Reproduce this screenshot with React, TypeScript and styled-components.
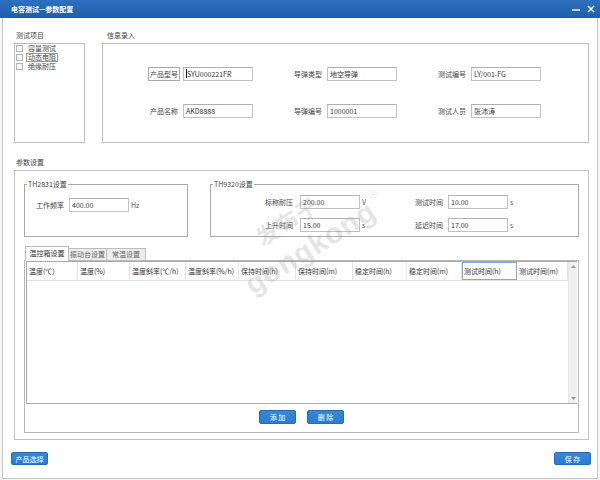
import styled, { createGlobalStyle } from 'styled-components';

const GlobalStyle = createGlobalStyle`
  html, body {
    margin: 0;
    padding: 0;
    background: #ffffff;
  }
  body {
    font-family: "Noto Sans CJK SC", "Noto Sans", sans-serif;
    font-size: 7px;
    color: #3a3a3a;
    white-space: nowrap;
  }
  * { box-sizing: border-box; }
`;

const Window = styled.div`
  position: relative;
  width: 600px;
  height: 480px;
  display: flex;
  flex-direction: column;
  overflow: hidden;
  background: #f6f6f6;
`;

const TitleBar = styled.div`
  height: 18px;
  flex-shrink: 0;
  display: flex;
  align-items: center;
  justify-content: space-between;
  padding: 0 5px 0 11px;
  background: linear-gradient(180deg, #2d70bd 0%, #1f5ea9 100%);
  color: #ffffff;
  font-size: 7px;
  font-weight: bold;
`;

const Controls = styled.div`
  display: flex;
  align-items: center;
  gap: 7px;
`;

const Frame = styled.div`
  flex: 1;
  margin: 0 2px 1px;
  border: 1px solid #c4c4c4;
  border-top: none;
  background: #ffffff;
  display: flex;
  flex-direction: column;
`;

const Content = styled.div`
  padding: 0 8px 0 11px;
`;

const TopRow = styled.div`
  display: flex;
  gap: 17px;
  margin-top: 12px;
`;

const Column = styled.div<{ $width?: number }>`
  display: flex;
  flex-direction: column;
  ${p => (p.$width ? `width: ${p.$width}px;` : 'flex: 1;')}
`;

const SectionLabel = styled.div<{ $indent?: number }>`
  height: 10px;
  line-height: 10px;
  margin-bottom: 3px;
  padding-left: ${p => p.$indent ?? 2}px;
  color: #444;
`;

const TestBox = styled.div`
  height: 100px;
  border: 1px solid #bdbdbd;
  padding: 0 0 0 1px;
  display: flex;
  flex-direction: column;
`;

const CheckRow = styled.label`
  display: flex;
  align-items: center;
  height: 9px;
  gap: 3px;
  color: #444;
`;

const CheckBox = styled.span`
  width: 7px;
  height: 7px;
  flex-shrink: 0;
  border: 1px solid #b3b3b3;
  background: #f7f7f7;
`;

const CheckText = styled.span<{ $focus?: boolean }>`
  height: 9px;
  line-height: 7px;
  padding: 0 1px;
  border: 1px solid ${p => (p.$focus ? '#9a9a9a' : 'transparent')};
`;

const InfoBox = styled.div`
  height: 100px;
  border: 1px solid #bdbdbd;
  padding: 23px 0 0 45px;
  display: grid;
  grid-template-columns: repeat(3, 144px);
  grid-auto-rows: 14px;
  row-gap: 23px;
`;

const Field = styled.div`
  display: flex;
  align-items: center;
`;

const FieldLabel = styled.span<{ $width: number; $boxed?: boolean }>`
  width: ${p => p.$width}px;
  flex-shrink: 0;
  display: flex;
  align-items: center;
  color: #444;
  & > span {
    line-height: 12px;
    padding: 0 1px;
    border: 1px solid ${p => (p.$boxed ? '#a8a8a8' : 'transparent')};
  }
`;

const TextBox = styled.div<{ $width: number }>`
  width: ${p => p.$width}px;
  height: 14px;
  flex-shrink: 0;
  border: 1px solid #c2c2c2;
  border-top-color: #b0b0b0;
  background: #ffffff;
  padding: 0 2px;
  line-height: 12px;
  color: #333;
  overflow: hidden;
`;

const Caret = styled.span`
  display: inline-block;
  width: 1px;
  height: 9px;
  vertical-align: -1px;
  background: #222;
`;

const Unit = styled.span<{ $width?: number }>`
  padding-left: 2px;
  color: #555;
  ${p => (p.$width ? `width: ${p.$width}px; flex-shrink: 0;` : '')}
`;

const ParamLabel = styled(SectionLabel)`
  margin-top: 14px;
`;

const ParamBox = styled.div`
  border: 1px solid #c0c0c0;
  padding: 8px 9px 6px;
  display: flex;
  flex-direction: column;
`;

const GroupsRow = styled.div`
  display: flex;
  gap: 22px;
`;

const Group = styled.fieldset<{ $width?: number; $pad: string }>`
  margin: 0;
  min-width: 0;
  border: 1px solid #a9a9a9;
  padding: ${p => p.$pad};
  ${p => (p.$width ? `width: ${p.$width}px; flex-shrink: 0;` : 'flex: 1;')}
  display: flex;
  flex-direction: column;
  gap: 9px;
`;

const Legend = styled.legend<{ $shift: number }>`
  margin-left: ${p => p.$shift}px;
  padding: 0 1px;
  line-height: 10px;
  color: #444;
`;

const TabBar = styled.div`
  display: flex;
  align-items: flex-end;
  height: 14px;
  margin-top: 10px;
  padding-left: 1px;
  position: relative;
  z-index: 1;
  margin-bottom: -1px;
`;

const Tab = styled.div<{ $width: number; $active?: boolean }>`
  width: ${p => p.$width}px;
  height: ${p => (p.$active ? 15 : 13)}px;
  border: 1px solid #bcbcbc;
  border-bottom: ${p => (p.$active ? 'none' : '1px solid #bcbcbc')};
  margin-left: ${p => (p.$active ? 0 : -1)}px;
  background: ${p => (p.$active ? '#ffffff' : '#ececec')};
  color: ${p => (p.$active ? '#333' : '#666')};
  text-align: center;
  line-height: ${p => (p.$active ? 13 : 11)}px;
  overflow: hidden;
`;

const TabPanel = styled.div`
  height: 173px;
  border: 1px solid #b8b8b8;
  padding: 0 1px;
  display: flex;
  flex-direction: column;
`;

const TableFrame = styled.div`
  height: 143px;
  border: 1px solid #a9a9a9;
  display: flex;
  background: #ffffff;
`;

const TableBody = styled.div`
  flex: 1;
  display: flex;
  flex-direction: column;
`;

const HeaderRow = styled.div`
  display: flex;
  height: 19px;
  border-bottom: 1px solid #e2e2e2;
`;

const HeaderCell = styled.div<{ $width: number; $selected?: boolean }>`
  width: ${p => p.$width}px;
  flex-shrink: 0;
  padding-left: 1px;
  line-height: 17px;
  overflow: hidden;
  color: #333;
  border: 1px solid ${p => (p.$selected ? '#84a9d6' : 'transparent')};
  border-right: 1px solid ${p => (p.$selected ? '#84a9d6' : '#e4e4e4')};
`;

const ScrollBar = styled.div`
  width: 9px;
  flex-shrink: 0;
  background: #f0f0f0;
  border-left: 1px solid #e6e6e6;
  display: flex;
  flex-direction: column;
  justify-content: space-between;
  align-items: center;
  padding: 3px 0;
`;

const ButtonRow = styled.div`
  display: flex;
  justify-content: center;
  gap: 11px;
  margin-top: 6px;
`;

const BlueButton = styled.button<{ $width?: number; $height?: number }>`
  width: ${p => p.$width ?? 37}px;
  height: ${p => p.$height ?? 14}px;
  padding: 0;
  border: 1px solid #1f6dbd;
  border-radius: 2px;
  background: linear-gradient(180deg, #3389dc 0%, #2a7cd0 100%);
  color: #ffffff;
  font-family: "Noto Sans CJK SC", "Noto Sans", sans-serif;
  font-size: 7px;
  line-height: 10px;
  white-space: pre;
  cursor: pointer;
`;

const Footer = styled.div`
  display: flex;
  justify-content: space-between;
  margin-top: 12px;
  padding: 0 6px 0 8px;
`;

const Watermark = styled.div`
  position: absolute;
  left: 222px;
  top: 246px;
  transform: rotate(-32deg);
  transform-origin: left top;
  color: rgba(160, 160, 160, 0.28);
  font-weight: bold;
  pointer-events: none;
  line-height: 24px;
`;

const MarkCn = styled.div`
  font-family: "Noto Sans CJK SC", sans-serif;
  font-size: 22px;
  padding-left: 34px;
  letter-spacing: 1px;
`;

const MarkEn = styled.div`
  font-family: "Liberation Sans", Arial, sans-serif;
  font-size: 29px;
  letter-spacing: 1px;
  & > sup {
    font-size: 12px;
    vertical-align: 18px;
    margin-left: 3px;
    font-weight: normal;
  }
`;

const infoFields = [
  { label: '产品型号', value: 'SYU000221FR', boxed: true, caret: true },
  { label: '导弹类型', value: '地空导弹' },
  { label: '测试编号', value: 'LY/001-FG' },
  { label: '产品名称', value: 'AKD8888' },
  { label: '导弹编号', value: '1000001' },
  { label: '测试人员', value: '张沛涛' },
];

const columns = [
  { title: '温度(℃)', width: 51 },
  { title: '温度(%)', width: 52 },
  { title: '温度斜率(℃/h)', width: 56 },
  { title: '温度斜率(%/h)', width: 53 },
  { title: '保持时间(h)', width: 57 },
  { title: '保持时间(m)', width: 57 },
  { title: '稳定时间(h)', width: 54 },
  { title: '稳定时间(m)', width: 55 },
  { title: '测试时间(h)', width: 55, selected: true },
  { title: '测试时间(m)', width: 51 },
];

const Arrow = ({ up }: { up?: boolean }) => (
  <svg width="5" height="3" viewBox="0 0 5 3">
    <path d={up ? 'M0 3 L2.5 0 L5 3 Z' : 'M0 0 L2.5 3 L5 0 Z'} fill="#9a9a9a" />
  </svg>
);

export default function App() {
  return (
    <Window>
      <GlobalStyle />
      <TitleBar>
        <span>电容测试—参数配置</span>
        <Controls>
          <svg width="8" height="8" viewBox="0 0 8 8">
            <path d="M0 5 H8" stroke="#ffffff" strokeWidth="1.4" />
          </svg>
          <svg width="8" height="8" viewBox="0 0 8 8">
            <path d="M1 1 L7 7 M7 1 L1 7" stroke="#ffffff" strokeWidth="1.5" />
          </svg>
        </Controls>
      </TitleBar>

      <Frame>
        <Content>
          <TopRow>
            <Column $width={71}>
              <SectionLabel>测试项目</SectionLabel>
              <TestBox>
                <CheckRow><CheckBox /><CheckText>容量测试</CheckText></CheckRow>
                <CheckRow><CheckBox /><CheckText $focus>动态电阻</CheckText></CheckRow>
                <CheckRow><CheckBox /><CheckText>绝缘耐压</CheckText></CheckRow>
              </TestBox>
            </Column>
            <Column>
              <SectionLabel $indent={5}>信息录入</SectionLabel>
              <InfoBox>
                {infoFields.map(f => (
                  <Field key={f.label}>
                    <FieldLabel $width={35} $boxed={f.boxed}><span>{f.label}</span></FieldLabel>
                    <TextBox $width={70}>
                      {f.caret && <Caret />}
                      {f.value}
                    </TextBox>
                  </Field>
                ))}
              </InfoBox>
            </Column>
          </TopRow>

          <ParamLabel>参数设置</ParamLabel>
          <ParamBox>
            <GroupsRow>
              <Group $width={164} $pad="9px 0 24px 9px">
                <Legend $shift={-7}>TH2831设置</Legend>
                <Field>
                  <FieldLabel $width={35}><span>工作频率</span></FieldLabel>
                  <TextBox $width={60}>400.00</TextBox>
                  <Unit>Hz</Unit>
                </Field>
              </Group>
              <Group $pad="6px 0 4px 52px">
                <Legend $shift={-50}>TH9320设置</Legend>
                <Field>
                  <FieldLabel $width={37}><span>标称耐压</span></FieldLabel>
                  <TextBox $width={60}>200.00</TextBox>
                  <Unit $width={53}>V</Unit>
                  <FieldLabel $width={35}><span>测试时间</span></FieldLabel>
                  <TextBox $width={60}>10.00</TextBox>
                  <Unit>s</Unit>
                </Field>
                <Field>
                  <FieldLabel $width={37}><span>上升时间</span></FieldLabel>
                  <TextBox $width={60}>15.00</TextBox>
                  <Unit $width={53}>s</Unit>
                  <FieldLabel $width={35}><span>延迟时间</span></FieldLabel>
                  <TextBox $width={60}>17.00</TextBox>
                  <Unit>s</Unit>
                </Field>
              </Group>
            </GroupsRow>

            <TabBar>
              <Tab $width={44} $active>温控箱设置</Tab>
              <Tab $width={39}>振动台设置</Tab>
              <Tab $width={40}>常温设置</Tab>
            </TabBar>
            <TabPanel>
              <TableFrame>
                <TableBody>
                  <HeaderRow>
                    {columns.map(c => (
                      <HeaderCell key={c.title} $width={c.width} $selected={c.selected}>
                        {c.title}
                      </HeaderCell>
                    ))}
                  </HeaderRow>
                </TableBody>
                <ScrollBar>
                  <Arrow up />
                  <Arrow />
                </ScrollBar>
              </TableFrame>
              <ButtonRow>
                <BlueButton>{'添 加'}</BlueButton>
                <BlueButton>{'删 除'}</BlueButton>
              </ButtonRow>
            </TabPanel>
          </ParamBox>
        </Content>

        <Footer>
          <BlueButton $width={37} $height={13}>产品选择</BlueButton>
          <BlueButton $width={37} $height={13}>{'保 存'}</BlueButton>
        </Footer>
      </Frame>

      <Watermark>
        <MarkCn>发布于</MarkCn>
        <MarkEn>gongkong<sup>®</sup></MarkEn>
      </Watermark>
    </Window>
  );
}
